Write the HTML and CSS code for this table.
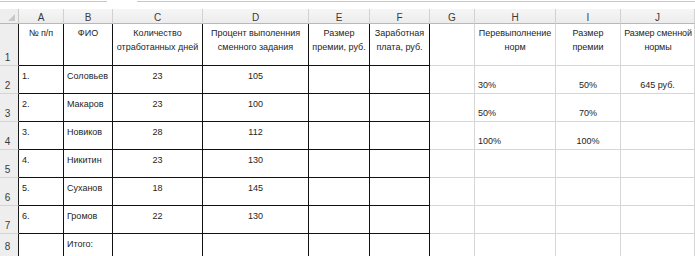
FILE: index.html
```html
<!DOCTYPE html>
<html lang="ru">
<head>
<meta charset="utf-8">
<link rel="stylesheet" href="styles.css">
</head>
<body>
<div class="topbar"><div class="namebox"></div><div class="gapbox"></div><div class="fxbox"></div></div>
<div class="sheet">
  <div class="corner"><span class="tri"></span></div>
  <div class="ch">A</div><div class="ch">B</div><div class="ch">C</div><div class="ch">D</div><div class="ch">E</div><div class="ch">F</div><div class="ch">G</div><div class="ch">H</div><div class="ch">I</div><div class="ch">J</div>

  <div class="rh">1</div>
  <div class="c t first hd">№ п/п</div>
  <div class="c t hd">ФИО</div>
  <div class="c t hd">Количество отработанных дней</div>
  <div class="c t hd">Процент выполенния сменного задания</div>
  <div class="c t hd">Размер премии, руб.</div>
  <div class="c t hd">Заработная плата, руб.</div>
  <div class="c g"></div>
  <div class="c g hd">Перевыполнение норм</div>
  <div class="c g hd">Размер премии</div>
  <div class="c g hd tight">Размер сменной нормы</div>

  <div class="rh">2</div>
  <div class="c t first">1.</div><div class="c t">Соловьев</div><div class="c t ctr">23</div><div class="c t ctr">105</div><div class="c t"></div><div class="c t"></div>
  <div class="c g"></div><div class="c g bot">30%</div><div class="c g bot ctr">50%</div><div class="c g bot ctr">645 руб.</div>

  <div class="rh">3</div>
  <div class="c t first">2.</div><div class="c t">Макаров</div><div class="c t ctr">23</div><div class="c t ctr">100</div><div class="c t"></div><div class="c t"></div>
  <div class="c g"></div><div class="c g bot">50%</div><div class="c g bot ctr">70%</div><div class="c g"></div>

  <div class="rh">4</div>
  <div class="c t first">3.</div><div class="c t">Новиков</div><div class="c t ctr">28</div><div class="c t ctr">112</div><div class="c t"></div><div class="c t"></div>
  <div class="c g"></div><div class="c g bot">100%</div><div class="c g bot ctr">100%</div><div class="c g"></div>

  <div class="rh">5</div>
  <div class="c t first">4.</div><div class="c t">Никитин</div><div class="c t ctr">23</div><div class="c t ctr">130</div><div class="c t"></div><div class="c t"></div>
  <div class="c g"></div><div class="c g"></div><div class="c g"></div><div class="c g"></div>

  <div class="rh">6</div>
  <div class="c t first">5.</div><div class="c t">Суханов</div><div class="c t ctr">18</div><div class="c t ctr">145</div><div class="c t"></div><div class="c t"></div>
  <div class="c g"></div><div class="c g"></div><div class="c g"></div><div class="c g"></div>

  <div class="rh">7</div>
  <div class="c t first">6.</div><div class="c t">Громов</div><div class="c t ctr">22</div><div class="c t ctr">130</div><div class="c t"></div><div class="c t"></div>
  <div class="c g"></div><div class="c g"></div><div class="c g"></div><div class="c g"></div>

  <div class="rh last">8</div>
  <div class="c t lr first"></div><div class="c t lr">Итого:</div><div class="c t lr"></div><div class="c t lr"></div><div class="c t lr"></div><div class="c t lr"></div>
  <div class="c g lr"></div><div class="c g lr"></div><div class="c g lr"></div><div class="c g lr"></div>
</div>
</body>
</html>
```
FILE: styles.css
```css
html, body {
  margin: 0;
  padding: 0;
  background: #fff;
  overflow: hidden;
}
body {
  width: 695px;
  height: 256px;
  font-family: "Liberation Sans", Arial, sans-serif;
  font-size: 9px;
  color: #1e1e1e;
}
.topbar {
  height: 9px;
  display: flex;
  align-items: flex-start;
}
.namebox {
  width: 107px;
  height: 1px;
  border-bottom: 1px solid #c8c8c8;
}
.gapbox {
  width: 30px;
}
.fxbox {
  flex: 1;
  height: 1px;
  border-bottom: 1px solid #c8c8c8;
}
.sheet {
  display: grid;
  grid-template-columns: 19px 45px 49px 90px 106px 61px 60px 45px 81px 65px 74px;
  grid-template-rows: 15px 42px 28px 28px 28px 28px 28px 28px 22px;
}
.corner {
  background: #eeeeee;
  border-right: 1px solid #c6c6c6;
  border-bottom: 1px solid #b8b8b8;
  box-sizing: border-box;
  position: relative;
}
.tri {
  position: absolute;
  right: 3px;
  bottom: 2px;
  width: 0;
  height: 0;
  border-left: 7px solid transparent;
  border-bottom: 7px solid #c8c8c8;
}
.ch {
  background: linear-gradient(#f6f6f6, #ececec);
  border-right: 1px solid #d2d2d2;
  border-bottom: 1px solid #b8b8b8;
  box-sizing: border-box;
  display: flex;
  align-items: center;
  justify-content: center;
  font-size: 10px;
  color: #3a3a3a;
  padding-top: 2px;
}
.rh {
  background: #eeeeee;
  border-right: 1px solid #1a1a1a;
  border-bottom: 1px solid #d4d4d4;
  box-sizing: border-box;
  display: flex;
  align-items: flex-end;
  justify-content: center;
  font-size: 10px;
  color: #3a3a3a;
  padding-bottom: 1px;
  padding-right: 3px;
  line-height: 12px;
}
.rh.last {
  border-bottom: none;
  padding-bottom: 3px;
}
.c {
  box-sizing: border-box;
  line-height: 14px;
  padding: 3px 3px 0 3px;
  white-space: nowrap;
  overflow: hidden;
}
.c.t {
  border-right: 1px solid #111;
  border-bottom: 1px solid #111;
}
.c.g {
  border-right: 1px solid #d6d6d6;
  border-bottom: 1px solid #d6d6d6;
}
.c.lr {
  border-bottom: none;
}
.hd {
  white-space: normal;
  text-align: center;
  padding: 2px 2px 0 2px;
}
.hd.tight {
  padding: 2px 0 0 1px;
  letter-spacing: -0.1px;
}
.ctr {
  text-align: center;
}
.bot {
  padding-top: 12px;
}
```
